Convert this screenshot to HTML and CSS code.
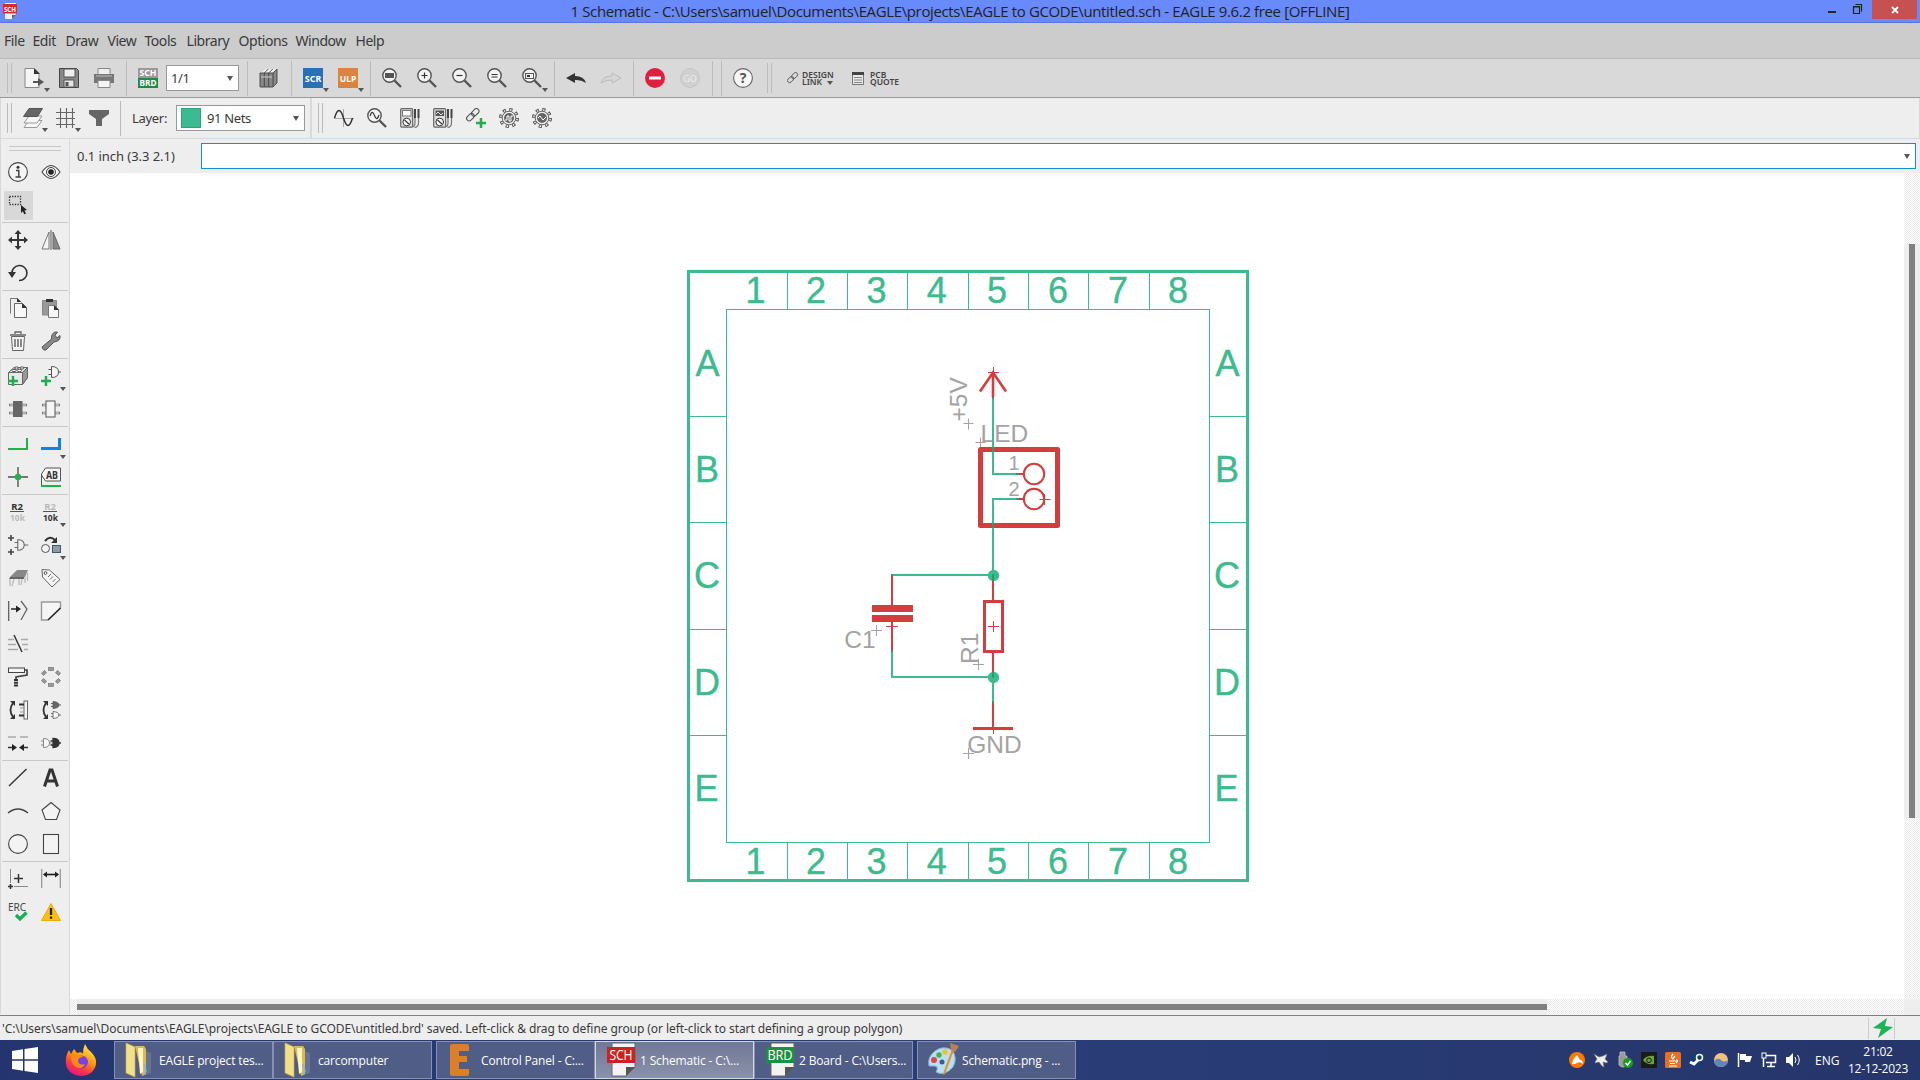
FILE: index.html
```html
<!DOCTYPE html>
<html lang="en">
<head>
<meta charset="utf-8">
<title>1 Schematic - EAGLE 9.6.2 free</title>
<link rel="stylesheet" href="styles.css">
</head>
<body>
<svg class="defs" width="0" height="0">
  <defs>
    <symbol id="lens" viewBox="0 0 20 20"><circle cx="7.5" cy="7.5" r="6.7" fill="#f4f4f4" stroke="#555" stroke-width="1.4"/><path d="M12.5 12.5L19 19" stroke="#555" stroke-width="2.4"/></symbol>
    <symbol id="chain" viewBox="0 0 20 20"><g fill="none" stroke="#555" stroke-width="1.3" transform="rotate(-45 8 8)"><rect x="-1" y="5" width="10" height="6" rx="3"/><rect x="7" y="5" width="10" height="6" rx="3"/></g></symbol>
    <symbol id="meter" viewBox="0 0 20 20"><rect x=".7" y=".7" width="12" height="18.4" rx="1" fill="#ddd" stroke="#666" stroke-width="1.2"/><circle cx="6.7" cy="14" r="3.8" fill="#fff" stroke="#333"/><path d="M4.5 12l4.4 4" stroke="#333" stroke-width="1.2"/><path d="M15 1v9M18.5 1v9" stroke="#444" stroke-width="2"/><path d="M15 10v5q0 3.5-3 4M18.5 10v5q0 4-4 4.5" fill="none" stroke="#777" stroke-width="1.2"/></symbol>
    <symbol id="gear" viewBox="0 0 20 20"><circle cx="10" cy="10" r="8.4" fill="none" stroke="#555" stroke-width="3.2" stroke-dasharray="3.2 3.4"/><circle cx="10" cy="10" r="8.2" fill="none" stroke="#eee" stroke-width="1.6" stroke-dasharray="1.4 5.04" stroke-dashoffset="-.9"/><circle cx="10" cy="10" r="6.8" fill="#eee" stroke="#666"/><circle cx="10" cy="10" r="5" fill="#666"/></symbol>
    <symbol id="gate" viewBox="0 0 20 20"><path d="M6 3.500h2q6 1 6 6.500t-6 6.500h-2zM2 7h4M2 13h4M14 10h5" fill="none" stroke="#666" stroke-width="1.3"/></symbol>
    <symbol id="folder" viewBox="0 0 32 36"><path d="M18 8l8 3v20l-8 3z" fill="#7f8a9c" opacity=".5"/><path d="M10 4h9l2 3v25l-4 2z" fill="#dcb951"/><path d="M13 6h5v24l-3 2z" fill="#fff6c4"/><path d="M1 1l9 4v30l-9-4z" fill="#f3e08b" stroke="#cfae4b" stroke-width=".7"/><path d="M19 22l2 7-2 3" fill="none" stroke="#7fb8e8" stroke-width="1.5"/></symbol>
  </defs>
</svg>

<header class="titlebar">
  <svg class="app-icon" width="14" height="17"><path d="M2 0h11v11l-4 5H2z" fill="#eee"/><path d="M9 16v-4h4z" fill="#666"/><rect width="14" height="9.500" y="1" fill="#d92a2a"/><text x="7" y="8.500" text-anchor="middle" class="t-badge" font-size="7" textLength="12" lengthAdjust="spacingAndGlyphs">SCH</text></svg>
  <div class="caption">1 Schematic - C:\Users\samuel\Documents\EAGLE\projects\EAGLE to GCODE\untitled.sch - EAGLE 9.6.2 free [OFFLINE]</div>
  <div class="win-buttons">
    <svg width="64" height="19"><path d="M20 12h8" stroke="#222" stroke-width="2"/><path d="M45.500 6.500h6v7h-6zM45 7h7M47.500 4.500h6v7" fill="none" stroke="#222" stroke-width="1.200"/></svg>
    <div class="close"><svg width="8" height="8"><path d="M1 1l6 6M7 1L1 7" stroke="#fff" stroke-width="1.800"/></svg></div>
  </div>
</header>

<nav class="menubar"><span class="m1">File</span><span class="m2">Edit</span><span class="m3">Draw</span><span class="m4">View</span><span class="m5">Tools</span><span class="m6">Library</span><span class="m7">Options</span><span class="m8">Window</span><span class="m9">Help</span></nav>

<div class="toolbar main-tools">
  <i class="handle"></i>
  <b class="btn drop"><svg width="20" height="20"><path d="M1 .5h9l5 5v14H1z" fill="#f5f5f5" stroke="#888"/><path d="M10 0l6 6h-6z" fill="#333"/><path d="M9 14h7" stroke="#555" stroke-width="2"/><path d="M14 10l6 4-6 4z" fill="#555"/></svg></b>
  <b class="btn"><svg width="20" height="20"><path d="M.5.5h17l2 2v17H.500z" fill="#888" stroke="#444"/><path d="M5 1h11v8H5z" fill="#eee" stroke="#555"/><path d="M5 12h10v7H5z" fill="#e5e5e5" stroke="#555"/><path d="M6.500 14h3v4h-3z" fill="#555"/></svg></b>
  <b class="btn"><svg width="20" height="20"><path d="M4 .5h12V7H4z" fill="#eee" stroke="#888"/><path d="M0 6h20v9H0z" fill="#777"/><path d="M2 8h16" stroke="#bbb"/><path d="M4 12.500h12v7H4z" fill="#f5f5f5" stroke="#888"/></svg></b>
  <i class="sep"></i>
  <b class="btn"><svg width="20" height="20"><rect width="20" height="10" fill="#999"/><rect y="10" width="20" height="10" fill="#1f8b43"/><text x="10" y="8.300" text-anchor="middle" class="t-badge" font-size="9" textLength="17" lengthAdjust="spacingAndGlyphs">SCH</text><text x="10" y="18.300" text-anchor="middle" class="t-badge" font-size="9" textLength="17" lengthAdjust="spacingAndGlyphs">BRD</text></svg></b>
  <div class="combo sheet"><span>1/1</span></div>
  <i class="sep after-combo"></i>
  <b class="btn"><svg width="20" height="20"><path d="M1 5l5-4h12v14l-5 4H1z" fill="#888"/><path d="M1 5l5-4h12l-4 4z" fill="#eee"/><path d="M1 5h13v14H1zM14 5l4-4v14l-4 4M5.300 5v14M9.700 5v14M5.300 5l4-4M9.700 5l4-4" fill="none" stroke="#444" stroke-width=".9"/><path d="M2 9h11" stroke="#ccc"/></svg></b>
  <i class="sep"></i>
  <b class="btn drop"><svg width="20" height="20"><rect width="20" height="20" fill="#2a70b8"/><text x="10" y="13.800" text-anchor="middle" class="t-badge" font-size="9.500" textLength="16.500" lengthAdjust="spacingAndGlyphs">SCR</text></svg></b>
  <b class="btn drop"><svg width="20" height="20"><rect width="20" height="20" fill="#dc843f"/><text x="10" y="13.800" text-anchor="middle" class="t-badge" font-size="9.500" textLength="16.500" lengthAdjust="spacingAndGlyphs">ULP</text></svg></b>
  <i class="sep"></i>
  <b class="btn"><svg width="20" height="20"><use href="#lens"/><rect x="3" y="5" width="9" height="5" fill="#555"/></svg></b>
  <b class="btn"><svg width="20" height="20"><use href="#lens"/><path d="M4.500 7.500h6M7.500 4.500v6" stroke="#333" stroke-width="1.200"/></svg></b>
  <b class="btn"><svg width="20" height="20"><use href="#lens"/><path d="M4.500 7.500h6" stroke="#333" stroke-width="1.200"/></svg></b>
  <b class="btn"><svg width="20" height="20"><use href="#lens"/><path d="M4.500 6.500h6M4.500 9h6" stroke="#333" stroke-width="1.200"/></svg></b>
  <b class="btn drop"><svg width="20" height="20"><use href="#lens"/><rect x="3.500" y="5.500" width="8" height="5" fill="none" stroke="#555"/><path d="M5 8h3" stroke="#333" stroke-width="2"/></svg></b>
  <i class="sep"></i>
  <b class="btn"><svg width="20" height="20"><path d="M0 10l9-5v3q9 0 11 7-5-3.500-11-3V15z" fill="#333"/></svg></b>
  <b class="btn"><svg width="20" height="20"><path d="M20 10l-9-5v3q-9 0-11 7 5-3.500 11-3V15z" fill="#d6d6d6" stroke="#bbb"/></svg></b>
  <i class="sep"></i>
  <b class="btn"><svg width="20" height="20"><circle cx="10" cy="10" r="10" fill="#df1f3d"/><path d="M4 10h12" stroke="#fff" stroke-width="3"/></svg></b>
  <b class="btn"><svg width="20" height="20"><circle cx="10" cy="10" r="9.500" fill="#d0d0d0" stroke="#c6c6c6"/><text x="10" y="14" text-anchor="middle" class="t-go">GO</text></svg></b>
  <i class="sep"></i><i class="sep"></i>
  <b class="btn"><svg width="20" height="20"><circle cx="10" cy="10" r="9.400" fill="#f7f7f7" stroke="#666" stroke-width="1.100"/><text x="10" y="15" text-anchor="middle" class="t-help">?</text></svg></b>
  <i class="handle link-handle"></i>
  <b class="wide design"><svg width="12" height="12"><use href="#chain" width="14" height="14"/></svg><span>DESIGN<br>LINK</span></b>
  <b class="wide quote"><svg width="12" height="13"><path d="M.5.5h11v12H.500z" fill="#e8e8e8" stroke="#777"/><path d="M0 1.500h12" stroke="#444" stroke-width="3"/><path d="M2 5.500h8M2 8h8M2 10.500h8" stroke="#888"/></svg><span>PCB<br>QUOTE</span></b>
</div>

<div class="toolbar param-tools">
  <i class="handle"></i>
  <b class="btn drop"><svg width="20" height="20"><g stroke="#999" fill="#f6f6f6"><path d="M6 12.500h13l-5 7H1z"/><path d="M6 8h13l-5 7H1z"/></g><path d="M6 .5h13.500l-5 8H.5z" fill="#666" stroke="#555"/></svg></b>
  <b class="btn drop"><svg width="20" height="20"><path d="M4.500 0v20M10.500 0v20M16.500 0v20M0 4.500h19M0 10.500h19M0 16.500h19" stroke="#666" stroke-width="1.100"/></svg></b>
  <b class="btn"><svg width="20" height="20"><path d="M0 2h20v4l-7 5v7H7v-7L0 6z" fill="#666"/></svg></b>
  <i class="sep"></i>
  <span class="layer-label">Layer:</span>
  <div class="combo layer"><em class="swatch"></em><span>91 Nets</span></div>
  <i class="split"></i>
  <i class="handle second"></i>
  <b class="btn"><svg width="20" height="20"><path d="M0 10.500h20M9.500 1v18" stroke="#aaa"/><path d="M.5 10q4.500-15 9 0t9 0" fill="none" stroke="#333" stroke-width="1.500"/></svg></b>
  <b class="btn"><svg width="20" height="20"><use href="#lens"/><path d="M3 8q2.300-7 4.500-.5T12 7" fill="none" stroke="#333" stroke-width="1.200"/></svg></b>
  <b class="btn"><svg width="20" height="20"><use href="#meter"/><rect x="2.500" y="2.500" width="8.500" height="5.500" fill="#fff" stroke="#777"/></svg></b>
  <b class="btn"><svg width="20" height="20"><use href="#meter"/><rect x="2.500" y="2.500" width="8.500" height="5.500" fill="#555"/><path d="M3 6l2-2 3 3 2-2" fill="none" stroke="#ddd"/></svg></b>
  <b class="btn"><svg width="20" height="20"><use href="#chain" width="17" height="17"/><path d="M10 15h10M15 10v10" stroke="#22ab50" stroke-width="2.500"/></svg></b>
  <b class="btn"><svg width="20" height="20"><use href="#gear"/><path d="M6 12h2V8h2v5h2V8h2" fill="none" stroke="#fff"/></svg></b>
  <b class="btn"><svg width="20" height="20"><use href="#gear"/><path d="M6 10l2-2 3 4 3-3" fill="none" stroke="#fff"/></svg></b>
</div>

<main class="workspace">
  <aside class="palette">
    <i class="grip"></i>
    <div class="tools">
      <b class="btn"><svg width="20" height="20"><circle cx="10" cy="10" r="9.400" fill="#f5f5f5" stroke="#444" stroke-width="1.100"/><circle cx="10" cy="5.300" r="1.500" fill="#333"/><path d="M8 8.500h2.800V15M7.500 15h5.500" fill="none" stroke="#444" stroke-width="1.500"/></svg></b>
      <b class="btn"><svg width="20" height="20"><path d="M1 10q9-13 18 0-9 13-18 0z" fill="#f5f5f5" stroke="#444" stroke-width="1.100"/><circle cx="10" cy="10" r="4.500" fill="none" stroke="#444"/><circle cx="10" cy="10" r="2.800" fill="#222"/></svg></b>
      <b class="btn on"><svg width="20" height="20"><path d="M1.500 1.500h11v8h-11z" fill="none" stroke="#333" stroke-width="1.300" stroke-dasharray="1.300 1.300"/><path d="M13 10l6 5-2.500.5 1.500 3-1.700.8-1.500-3L13 18z" fill="#222"/></svg></b>
    </div>
    <div class="tools">
      <b class="btn"><svg width="20" height="20"><path d="M2 10h16M10 2v16" stroke="#333" stroke-width="2"/><path d="M10 0l3.500 4h-7zM10 20l3.500-4h-7zM0 10l4-3.500v7zM20 10l-4-3.500v7z" fill="#333"/></svg></b>
      <b class="btn"><svg width="20" height="20"><path d="M8 2v17H1z" fill="#f5f5f5" stroke="#777"/><path d="M12 2v17h7z" fill="#888" stroke="#666"/><path d="M10 0v20" stroke="#555"/></svg></b>
      <b class="btn"><svg width="20" height="20"><path d="M4 11a7.500 7.500 0 1 1 7 6.500" fill="none" stroke="#333" stroke-width="1.600"/><path d="M0 9h8l-4 6z" fill="#333"/></svg></b>
    </div>
    <div class="tools">
      <b class="btn"><svg width="20" height="20"><path d="M2.500 15.500v-15h7l4 4" fill="none" stroke="#777"/><path d="M6.500 5.500h8l4 4v10h-12z" fill="#f7f7f7" stroke="#666"/><path d="M14 5l5 5h-5zM9 0l4 4H9z" fill="#333"/></svg></b>
      <b class="btn"><svg width="20" height="20"><path d="M1.500 2.500h14V17h-14z" fill="#999" stroke="#888"/><path d="M5 1h7v3H5z" fill="#333"/><path d="M7.500 7.500h6l4 4v8h-10z" fill="#f7f7f7" stroke="#777"/><path d="M13 7l5 5h-5z" fill="#333"/></svg></b>
      <b class="btn"><svg width="20" height="20"><path d="M3.500 5.500h13l-1 14h-11z" fill="#f2f2f2" stroke="#666"/><path d="M2 4h16M7 3V1h6v2" fill="none" stroke="#666" stroke-width="1.300"/><path d="M7 8v8M10 8v8M13 8v8" stroke="#555" stroke-width="1.300"/></svg></b>
      <b class="btn"><svg width="20" height="20"><path d="M1 16L10.500 8Q10 3 14 1l2.500.2-2.500 3L16 7l3-2.500Q20 10 13 11L5 19q-3 1-4-3z" fill="#888" stroke="#555"/></svg></b>
    </div>
    <div class="tools">
      <b class="btn"><svg width="20" height="20"><path d="M.5 6.500L6 1.500h13.500v10l-5 7H.500z" fill="#e8e8e8" stroke="#666"/><path d="M14.500 6.500l5-5v10l-5 7z" fill="#999" stroke="#666"/><path d="M.5 6.500h14" stroke="#666"/><g fill="#fff" stroke="#555"><ellipse cx="6" cy="4.500" rx="2.200" ry="1.200"/><ellipse cx="11.500" cy="4.500" rx="2.200" ry="1.200"/><ellipse cx="8.500" cy="2" rx="2" ry="1.100"/><ellipse cx="14" cy="2" rx="2" ry="1.100"/></g><path d="M0 15h10M5 10v10" stroke="#22ab50" stroke-width="2.500"/></svg></b>
      <b class="btn drop"><svg width="20" height="20"><path d="M10.500.5q7 0 7 5.500t-7 5.500zM7.500 3.500h3M7.500 8.500h3M17.500 6H20" fill="#f5f5f5" stroke="#555"/><path d="M0 15h10M5 10v10" stroke="#22ab50" stroke-width="2.500"/></svg></b>
      <b class="btn"><svg width="20" height="20"><path d="M1 6h18M1 14h18" stroke="#777" stroke-width="2.600"/><path d="M2 6h16M2 14h16" stroke="#eee"/><rect x="5" y="2" width="9.500" height="16" fill="#666"/></svg></b>
      <b class="btn"><svg width="20" height="20"><path d="M1 6h18M1 14h18" stroke="#777" stroke-width="2.600"/><path d="M2 6h16M2 14h16" stroke="#eee"/><rect x="5" y="2" width="9" height="16" fill="#f5f5f5" stroke="#555"/></svg></b>
    </div>
    <div class="tools">
      <b class="btn"><svg width="20" height="20"><path d="M0 15h19V4" fill="none" stroke="#22b14c" stroke-width="2"/></svg></b>
      <b class="btn drop"><svg width="20" height="20"><path d="M0 14.500h18.500V4" fill="none" stroke="#0a84e8" stroke-width="3"/></svg></b>
      <b class="btn"><svg width="20" height="20"><path d="M0 10h20M10 0v20" stroke="#777" stroke-width="1.800"/><circle cx="10" cy="10" r="3.200" fill="#22b14c"/></svg></b>
      <b class="btn"><svg width="20" height="20"><path d="M.5 18V7l4-6h15v13h-15l-4-6" fill="#f5f5f5" stroke="#555"/><path d="M0 19h20" stroke="#22b14c" stroke-width="2"/><text x="11" y="11.500" text-anchor="middle" class="t-icon" font-size="10" textLength="12" lengthAdjust="spacingAndGlyphs">AB</text></svg></b>
    </div>
    <div class="tools">
      <b class="btn"><svg width="20" height="20"><text x="9" y="7.500" text-anchor="middle" class="t-icon" font-size="9.500">R2</text><path d="M2 9.500h14" stroke="#555"/><text x="9.500" y="18.500" text-anchor="middle" class="t-icon dim" font-size="9.500" textLength="15" lengthAdjust="spacingAndGlyphs">10k</text></svg></b>
      <b class="btn drop"><svg width="20" height="20"><text x="9" y="7.500" text-anchor="middle" class="t-icon dim" font-size="9.500">R2</text><path d="M2 9.500h14" stroke="#555"/><text x="9.500" y="18.500" text-anchor="middle" class="t-icon" font-size="9.500" textLength="15" lengthAdjust="spacingAndGlyphs">10k</text></svg></b>
      <b class="btn"><svg width="20" height="20"><use href="#gate" x="5" y="2" width="16" height="16"/><path d="M0 3h6M3 0v6M0 17h6M3 14v6" stroke="#444" stroke-width="1.600"/></svg></b>
      <b class="btn drop"><svg width="20" height="20"><circle cx="4.500" cy="13.500" r="4" fill="#f5f5f5" stroke="#555"/><rect x="11.500" y="10.500" width="8" height="7" fill="#999" stroke="#335e82"/><path d="M4 6q5-6 10-1" fill="none" stroke="#333" stroke-width="2"/><path d="M16 2v6h-6z" fill="#333"/></svg></b>
      <b class="btn"><svg width="20" height="20"><path d="M9 2h11l-3 7H2z" fill="#888"/><path d="M2 9h14v2H1z" fill="#666"/><path d="M2 11v7M6 11l-2 7M11 11v6M14 11l-1 6M17 9v6M19.500 5v8" stroke="#bbb" stroke-width="1.300"/></svg></b>
      <b class="btn"><svg width="20" height="20"><path d="M1 1.500l7.500.5L19 11.500 11 19 1.500 9z" fill="#f5f5f5" stroke="#666"/><circle cx="4.500" cy="5" r="1.400" fill="none" stroke="#555"/><path d="M7 9l3-3M9 11.500l3-3M11.500 14l3-3" stroke="#666"/></svg></b>
      <b class="btn"><svg width="20" height="20"><path d="M.7 0v20" stroke="#555" stroke-width="1.200"/><path d="M3 8h7" stroke="#333" stroke-width="1.600"/><path d="M8 4.500l5 3.500-5 3.500z" fill="#222"/><path d="M13 0l6 8-6 11" fill="none" stroke="#666" stroke-width="1.300"/></svg></b>
      <b class="btn"><svg width="20" height="20"><path d="M7 19H.500V1h19v6" fill="#f5f5f5" stroke="#999" stroke-width="1.400"/><path d="M7 19L19.500 7" stroke="#222" stroke-width="1.700"/></svg></b>
      <b class="btn"><svg width="20" height="20"><path d="M0 5.500h6M13 5.500h7M0 10.500h8M14 10.500h6M0 15.500h10M16 15.500h4" stroke="#aaa" stroke-width="1.300"/><path d="M6 1l8 17" stroke="#333" stroke-width="1.500"/></svg></b>
      <i class="blank"></i>
      <b class="btn"><svg width="20" height="20"><rect x=".5" y="1" width="16" height="4.500" fill="#f5f5f5" stroke="#444"/><path d="M17 3h2v5L8 10v3" fill="none" stroke="#444" stroke-width="1.700"/><path d="M8 12v8" stroke="#333" stroke-width="4" stroke-dasharray="2 .7"/></svg></b>
      <b class="btn"><svg width="20" height="20"><g fill="#999" stroke="#777" stroke-width=".7"><rect x="7.500" y=".5" width="5" height="3"/><rect x="7.500" y="16.500" width="5" height="3"/><rect x="1" y="4.500" width="4" height="3" transform="rotate(-40 3 6)"/><rect x="15" y="4.500" width="4" height="3" transform="rotate(40 17 6)"/><rect x="1" y="12.500" width="4" height="3" transform="rotate(40 3 14)"/><rect x="15" y="12.500" width="4" height="3" transform="rotate(-40 17 14)"/></g></svg></b>
      <b class="btn"><svg width="20" height="20"><path d="M5 3q-5 7 0 14" fill="none" stroke="#333" stroke-width="1.800"/><path d="M2 1h5v5zM2 19h5v-5z" fill="#333"/><rect x="16" y="1" width="3.500" height="18" fill="#f5f5f5" stroke="#666"/><path d="M11 4.500h5M11 15.500h5" stroke="#333" stroke-width="2"/><path d="M12 8h4M12 12h4" stroke="#999"/></svg></b>
      <b class="btn"><svg width="20" height="20"><path d="M5 3q-5 7 0 14" fill="none" stroke="#333" stroke-width="1.800"/><path d="M2 1h5v5zM2 19h5v-5z" fill="#333"/><path d="M12 1.500q6 .5 6 3.500t-6 3.500zM10 3.500h2M10 6.500h2M17 5h3" fill="#666" stroke="#666"/><path d="M12 11.500q6 .5 6 3.500t-6 3.500zM10 13.500h2M10 16.500h2M17 15h3" fill="#f5f5f5" stroke="#777"/></svg></b>
      <b class="btn"><svg width="20" height="20"><path d="M0 4h8M12 4h8" stroke="#aaa" stroke-width="1.600"/><path d="M0 14.500h6M14 14.500h6" stroke="#333" stroke-width="1.500"/><path d="M4 11l5 3.500L4 18zM16 11l-5 3.500 5 3.500z" fill="#222"/></svg></b>
      <b class="btn"><svg width="20" height="20"><path d="M2.500 5.500q6 0 6 4.500t-6 4.500zM0 8h2M0 12h2M8.500 10h2" fill="#f5f5f5" stroke="#888"/><path d="M12 5.500q6 0 6 4.500t-6 4.500zM9.500 8h3M9.500 12h3M17 10h3" fill="#333" stroke="#333" stroke-width="1.300"/></svg></b>
    </div>
    <div class="tools">
      <b class="btn"><svg width="20" height="20"><path d="M1 18L18.500 1" stroke="#333" stroke-width="1.400"/></svg></b>
      <b class="btn"><svg width="20" height="20"><path d="M3.500 18.500L9 2h2l5.500 16.500M5.500 13h9" fill="none" stroke="#333" stroke-width="3"/></svg></b>
      <b class="btn"><svg width="20" height="20"><path d="M0 12q10-8 20 0" fill="none" stroke="#444" stroke-width="1.400"/></svg></b>
      <b class="btn"><svg width="20" height="20"><path d="M10 1.500l9 7.500-3.500 9.500h-11L1 9z" fill="#f3f3f3" stroke="#444" stroke-width="1.100"/></svg></b>
      <b class="btn"><svg width="20" height="20"><circle cx="10" cy="10" r="9.400" fill="#f3f3f3" stroke="#444" stroke-width="1.100"/></svg></b>
      <b class="btn"><svg width="20" height="20"><rect x="2.500" y=".5" width="15" height="19" fill="#f3f3f3" stroke="#444" stroke-width="1.100"/></svg></b>
    </div>
    <div class="tools">
      <b class="btn"><svg width="20" height="20"><path d="M2.500 0v14M6 17.500h14" stroke="#888"/><path d="M6 9.500h9M10.500 5v9M0 17.500h5M2.500 15v5" stroke="#333" stroke-width="1.500"/></svg></b>
      <b class="btn"><svg width="20" height="20"><path d="M.7 0v19M19.300 0v19" stroke="#999" stroke-width="1.300"/><path d="M3 5.500h14" stroke="#222" stroke-width="1.700"/><path d="M2 5.500l4-3v6zM18 5.500l-4-3v6z" fill="#222"/></svg></b>
      <b class="btn"><svg width="20" height="20"><text x="9" y="9" text-anchor="middle" class="t-erc">ERC</text><path d="M8 13l4 4 6.500-6.500" fill="none" stroke="#16b04f" stroke-width="3.200"/></svg></b>
      <b class="btn"><svg width="20" height="20"><path d="M10 1.500l9.500 17H.500z" fill="#fdc010" stroke="#f0ab00"/><path d="M10 6v7M10 14.500v2.300" stroke="#222" stroke-width="2.300"/></svg></b>
    </div>
  </aside>

  <section class="editor">
    <div class="command-row"><span class="coords">0.1 inch (3.3 2.1)</span><div class="command"></div></div>
    <div class="view">
      <svg class="sheet-view" viewBox="70 173 1834 826" width="1834" height="826">
        <g fill="none" stroke="#3dbb90">
          <rect x="688.500" y="271.500" width="559" height="609" stroke-width="3"/>
          <rect x="726.500" y="309.500" width="483" height="533"/>
          <path d="M787.500 273v36M847.500 273v36M907.500 273v36M968.500 273v36M1028.500 273v36M1088.500 273v36M1149.500 273v36M787.500 843v36M847.500 843v36M907.500 843v36M968.500 843v36M1028.500 843v36M1088.500 843v36M1149.500 843v36"/>
          <path d="M690 416.500h36M690 522.500h36M690 629.500h36M690 735.500h36M1210 416.500h36M1210 522.500h36M1210 629.500h36M1210 735.500h36"/>
        </g>
        <g class="frame-text">
          <text x="755.500" y="303">1</text><text x="816" y="303">2</text><text x="876.500" y="303">3</text><text x="936.800" y="303">4</text><text x="997" y="303">5</text><text x="1058" y="303">6</text><text x="1118" y="303">7</text><text x="1178" y="303">8</text>
          <text x="755.500" y="874">1</text><text x="816" y="874">2</text><text x="876.500" y="874">3</text><text x="936.800" y="874">4</text><text x="997" y="874">5</text><text x="1058" y="874">6</text><text x="1118" y="874">7</text><text x="1178" y="874">8</text>
          <text x="707.500" y="375.500">A</text><text x="707" y="482">B</text><text x="707" y="588">C</text><text x="707" y="695">D</text><text x="706.500" y="801">E</text>
          <text x="1227.500" y="375.500">A</text><text x="1227" y="482">B</text><text x="1227" y="588">C</text><text x="1227" y="695">D</text><text x="1226.500" y="801">E</text>
        </g>
        <g class="part-text">
          <text transform="translate(967.400 421.500) rotate(-90)">+5V</text>
          <text x="980.500" y="442">LED</text>
          <text x="1008.500" y="470" class="pin">1</text><text x="1008.500" y="496" class="pin">2</text>
          <text x="844.300" y="648">C1</text>
          <text transform="translate(978 664) rotate(-90)">R1</text>
          <text x="967.300" y="753">GND</text>
        </g>
        <path d="M963.500 423.500h10M968.500 418.500v11M975.500 442.500h10M980.500 437.500v11M871 630.500h11M876.500 625v11M973 664.500h11M978.500 659v11M963 753.500h11M968.500 748v11" stroke="#a3a3a3"/>
        <g fill="none" stroke="#d43c3d" stroke-width="2">
          <path d="M993 372v25M980 391.500l13-19 13 19" stroke-width="2.600"/>
          <rect x="980.500" y="449.500" width="77" height="76" stroke-width="5" stroke-linejoin="round"/>
          <circle cx="1034" cy="474" r="10.200"/><circle cx="1034" cy="499" r="10.200"/>
          <path d="M1018 474h6M1018 499h6M892 574v31M892 622v29M993 581v20M993 653v25M993 702v26"/>
          <rect x="984.500" y="601.500" width="18" height="50" stroke-width="3"/>
          <path d="M872 608.500h41M872 618.500h41" stroke-width="7"/>
          <path d="M973 728.500h40" stroke-width="3"/>
          <path d="M988 372.500h11M993.500 367v11M1039.500 499.500h11M1044.500 494v11M886 626.500h12M988 626.500h11M993.500 621v11M993.500 730v4" stroke-width="1"/>
        </g>
        <g fill="none" stroke="#3dbb90" stroke-width="2">
          <path d="M993 397v77h25M1018 499h-25v82M993 575H892M892 651v26h101M993 677v26"/>
        </g>
        <circle cx="993.500" cy="575.500" r="5.700" fill="#3dbb90"/><circle cx="993.500" cy="677.500" r="5.700" fill="#3dbb90"/>
        <path d="M993 397v2M1016 474h3M1016 499h3M993 574v7M892 574v2M892 650v2M993 672v6M993 701v2M993 447v5M993 523v5" stroke="#31986a" stroke-width="2"/>
      </svg>
      <div class="vscroll"><i></i></div>
      <div class="hscroll"><i></i></div>
      <div class="corner"></div>
    </div>
  </section>
</main>

<footer class="statusbar"><span>'C:\Users\samuel\Documents\EAGLE\projects\EAGLE to GCODE\untitled.brd' saved. Left-click &amp; drag to define group (or left-click to start defining a group polygon)</span>
  <div class="bolt"><svg width="20" height="20"><path d="M14 0L0 10l8 1-3 9 15-11-8-1z" fill="#1cb454"/></svg></div>
</footer>

<div class="taskbar">
  <div class="start"><svg width="26" height="26"><path d="M0 4l11-1.700V12.200H0zM12.500 2L26 0v12.200H12.500zM0 13.700h11v10L0 22zM12.500 13.700H26V26l-13.500-2z" fill="#fff"/></svg></div>
  <div class="firefox"><svg width="32" height="32"><defs><linearGradient id="fx" x1=".8" y1="0" x2=".3" y2="1"><stop offset="0" stop-color="#fff44f"/><stop offset=".45" stop-color="#ff980e"/><stop offset=".75" stop-color="#ff3647"/><stop offset="1" stop-color="#e31587"/></linearGradient></defs><path d="M20 0q2 5 6 8 6 6 5 12-2 11-15 12Q3 31 1 20 0 12 4 6l2 4 3-5 3 4q5-2 6 1 0-6 2-10z" fill="url(#fx)"/><circle cx="16.500" cy="18" r="6.500" fill="#7542e5"/><path d="M6 13q6-4 13 0-6 0-6 4 1 5 7 3-3 6-9 3-5-3-5-10z" fill="#ff8a16"/></svg></div>
  <div class="task t1"><svg width="32" height="36"><use href="#folder"/></svg><span>EAGLE project tes...</span></div>
  <div class="task t2"><svg width="32" height="36"><use href="#folder"/></svg><span>carcomputer</span></div>
  <div class="task t3"><svg width="32" height="36"><path d="M3 4q0-2 3-2h14q2 0 2 2v5H12v5h8v6h-8v7h10v5q0 2-2 2H6q-3 0-3-2z" fill="#dc7f27"/></svg><span>Control Panel - C:...</span></div>
  <div class="task t4 active"><svg width="32" height="36"><path d="M5 1h23v24l-9 9H5z" fill="#f3f3f3" stroke="#666"/><path d="M19 34v-9h9z" fill="#555"/><rect y="5" width="28" height="16" fill="#d0201f"/><text x="14" y="18" text-anchor="middle" class="t-doc" textLength="23" lengthAdjust="spacingAndGlyphs">SCH</text></svg><span>1 Schematic - C:\...</span></div>
  <div class="task t5"><svg width="32" height="36"><path d="M5 1h23v24l-9 9H5z" fill="#f3f3f3" stroke="#666"/><path d="M19 34v-9h9z" fill="#555"/><rect y="5" width="28" height="16" fill="#1a9040"/><text x="14" y="18" text-anchor="middle" class="t-doc" textLength="25" lengthAdjust="spacingAndGlyphs">BRD</text></svg><span>2 Board - C:\Users...</span></div>
  <div class="task t6"><svg width="32" height="36"><path d="M1 24q-2-9 6-15t17-1q6 8 1 17-9 10-17 5 3-5-1-6z" fill="#b9dff2" stroke="#79b4d8"/><circle cx="6" cy="18" r="3" fill="#e04343"/><circle cx="11" cy="13" r="2.700" fill="#46b04a"/><circle cx="17" cy="10" r="2.700" fill="#f0c030"/><circle cx="14" cy="20" r="2.500" fill="#33618d"/><path d="M26 8l-9 24-2 1 1-4 8-22z" fill="#ef8e25"/><path d="M22 1l9 3-4 6-4-2z" fill="#b98255"/></svg><span>Schematic.png - ...</span></div>
  <div class="tray">
    <svg width="16" height="16"><circle cx="8" cy="8" r="8" fill="#ff7800"/><path d="M3 12q1-6 5-9l3 5q3 0 3 4-3-3-6-1-3 2-5 1z" fill="#fff"/></svg>
    <svg width="16" height="16"><path d="M1 2l5 3 4-1 4-2-1 3-1 2 3 3-2 1-3-1 1 5-2-1-3-4-4 1v-1l2-3z" fill="#eee" stroke="#777" stroke-width=".6"/></svg>
    <svg width="16" height="16"><path d="M3 0h5v4h2v9q-4 4-8 0V4h1z" fill="#999" stroke="#ccc" stroke-width=".7"/><circle cx="11" cy="11" r="5" fill="#15a01b"/><path d="M8.500 11l2 2 3-4" stroke="#fff" stroke-width="1.500" fill="none"/></svg>
    <svg width="16" height="16"><rect width="16" height="16" fill="#191c19"/><path d="M2 8q4-5 11-4v8Q5 13 2 8z" fill="#6da43a"/><circle cx="8" cy="8.300" r="2.300" fill="none" stroke="#191c19"/></svg>
    <svg width="16" height="16"><rect width="16" height="16" rx="1.500" fill="#e0702a"/><path d="M8 2q-3 3 0 5 1-2 2-3M4 9h7M5 11.500h5M4 14h8M11 8q3 0 0 3" fill="none" stroke="#fff" stroke-width="1.200"/></svg>
    <svg width="16" height="16"><circle cx="8" cy="8" r="7.500" fill="#143e72"/><circle cx="10.500" cy="5.500" r="3" fill="none" stroke="#fff" stroke-width="1.500"/><path d="M1 10l4 2 4-4" fill="none" stroke="#fff" stroke-width="3"/></svg>
    <svg width="16" height="16"><circle cx="8" cy="8" r="7" fill="#f3c07d"/><path d="M1 9q4-4 7-1t7 0q-1 7-7 7T1 9z" fill="#5f86b8"/></svg>
    <svg width="16" height="16"><path d="M1.500 1v14" stroke="#fff" stroke-width="1.500"/><path d="M3 2h6v2h6l-2 6H8V8H3z" fill="#fff"/></svg>
    <svg width="16" height="16"><path d="M5 3.500h9.500v7H5M10 10v4M6 14.500h8M2.500 6v9" fill="none" stroke="#fff" stroke-width="1.500"/><rect x="1" y="1" width="4" height="5" fill="#26366b" stroke="#fff"/></svg>
    <svg width="16" height="16"><path d="M1 5h3l4-4v14l-4-4H1z" fill="#fff"/><path d="M10 5q2 3 0 6M12.500 3q3.500 5 0 10" fill="none" stroke="#fff"/></svg>
  </div>
  <span class="lang">ENG</span>
  <div class="clock"><span>21:02</span><span>12-12-2023</span></div>
</div>
</body>
</html>
```
FILE: styles.css
```css
* { box-sizing: border-box; }
body { margin: 0; width: 1920px; height: 1080px; overflow: hidden; display: flex; flex-direction: column; font-family: "Noto Sans", sans-serif; font-size: 13px; color: #3a3a3a; background: #eee; }
svg { display: block; flex: none; overflow: visible; }
.defs { position: absolute; }
i, em, b { font-style: normal; font-weight: normal; display: block; flex: none; }
span { white-space: nowrap; }

.titlebar { flex: none; height: 23px; background: #688afb; border-bottom: 1px solid #5876d6; display: flex; align-items: flex-start; }
.app-icon { margin: 3px 0 0 3px; }
.caption { flex: 1; text-align: center; font: 15px/23px "Open Sans", sans-serif; color: #222; padding-left: 95px; white-space: nowrap; letter-spacing: -.37px; }
.win-buttons { display: flex; width: 112px; }
.close { width: 45px; height: 19px; background: #c75050; display: flex; align-items: center; justify-content: center; }

.menubar { flex: none; height: 36px; background: #ccc; border-bottom: 1px solid #b9b9b9; display: flex; align-items: center; padding-left: 4px; font-size: 14px; letter-spacing: -.45px; }
.menubar span { flex: none; }
.m1 { width: 28.500px; }
.m2 { width: 33px; }
.m3 { width: 42px; }
.m4 { width: 37px; }
.m5 { width: 42px; }
.m6 { width: 52px; }
.m7 { width: 57px; }
.m8 { width: 60px; }

.toolbar { flex: none; display: flex; align-items: center; }
.main-tools { height: 39px; background: #d9d9d9; border-bottom: 1px solid #999; }
.param-tools { height: 41px; border-bottom: 1px solid #d9d9d9; border-left: 1px solid #d9d9d9; border-right: 1px solid #d9d9d9; }
.handle { width: 5px; height: 30px; margin: 0 4px 0 7px; border: solid #bbb; border-width: 0 1px; }
.param-tools .handle { margin: 0 4px 0 6px; }
.btn { width: 35px; height: 33px; display: flex; align-items: center; justify-content: center; position: relative; }
.param-tools .btn { width: 33px; }
.drop::after { content: ""; position: absolute; right: 1px; bottom: 3px; border: 3px solid transparent; border-top: 4px solid #555; border-bottom: 0; }
.sep { width: 9px; height: 35px; background: linear-gradient(#bbb, #bbb) 5px 0 / 1px 100% no-repeat; }
.after-combo { margin-left: 3px; }
.combo { background: #fff; border: 1px solid #999; height: 26px; display: flex; align-items: center; position: relative; letter-spacing: -.35px; }
.combo::after, .command::after { content: ""; position: absolute; right: 5px; top: 10px; border: 3px solid transparent; border-top: 5px solid #555; border-bottom: 0; }
.sheet { width: 73px; margin-left: 1px; padding-left: 4px; }
.link-handle { margin: 0 15px 0 7px; }
.wide { display: flex; align-items: center; gap: 3px; font: 600 8.500px/7px "Noto Sans", sans-serif; color: #444; position: relative; }
.design { width: 65px; }
.design::after { content: ""; position: absolute; right: 19px; bottom: 0; border: 3px solid transparent; border-top: 4px solid #555; border-bottom: 0; }
.quote { gap: 6px; }

.layer-label { margin-left: 8px; width: 44px; letter-spacing: -.3px; }
.layer { width: 129px; padding-left: 4px; }
.swatch { width: 20px; height: 20px; background: #3dbb90; border: 1px solid #2fa37b; margin-right: 6px; }
.split { width: 2px; height: 40px; background: #d9d9d9; margin-left: 5px; }

.workspace { flex: 1; min-height: 0; display: flex; }
.palette { width: 70px; border: solid #d9d9d9; border-width: 0 1px; margin-bottom: 1px; }
.palette .btn { width: 33px; align-items: flex-start; justify-content: flex-start; padding: 6px 0 0 7px; }
.grip { height: 17px; margin: 0 8px; background: linear-gradient(#c8c8c8, #c8c8c8) 0 7px / 100% 1px no-repeat, linear-gradient(#c8c8c8, #c8c8c8) 0 11px / 100% 1px no-repeat; }
.tools { display: grid; grid-template-columns: 33px 33px; grid-auto-rows: 33px; padding-bottom: 2px; background: linear-gradient(#c9c9c9, #c9c9c9) 1px calc(100% - 1px) / 66px 1px no-repeat; }
.tools:last-child { background: none; }
.on { background: linear-gradient(#d8d8d8, #d8d8d8) 3px 2px / 29px 29px no-repeat; }
.palette .drop::after { right: 1px; bottom: 2px; }
.editor { flex: 1; display: flex; flex-direction: column; }
.command-row { height: 34px; flex: none; display: flex; align-items: center; }
.coords { width: 131px; padding-left: 7px; letter-spacing: -.05px; }
.command { width: 1715px; height: 26px; margin-top: -1px; border: 1px solid #1191cf; background: #fff; position: relative; }
.view { flex: 1; display: grid; grid-template-columns: 1834px 16px; grid-template-rows: 826px 16px; }
.sheet-view { background: #fff; }
.vscroll, .hscroll { background: repeating-conic-gradient(#e9e9e9 0 25%, #fff 0 50%) 0 0 / 2px 2px; }
.vscroll { padding-top: 71px; }
.vscroll i { width: 16px; height: 574px; background: linear-gradient(90deg, #eee 5px, #808080 5px 11px, #eee 11px); }
.hscroll { padding-left: 7px; }
.hscroll i { width: 1470px; height: 16px; background: linear-gradient(#eee 5px, #808080 5px 11px, #eee 11px); }
.frame-text { font: 36px "Liberation Sans", sans-serif; fill: #3dbb90; stroke: #3dbb90; stroke-width: .4px; text-anchor: middle; }
.part-text { font: 24.500px "Liberation Sans", sans-serif; fill: #a3a3a3; }
.pin { font-size: 20px; }

.statusbar { flex: none; height: 25px; border-top: 1px solid #808080; display: flex; justify-content: space-between; align-items: center; padding: 0 25px 0 2px; font-size: 12px; letter-spacing: -.075px; }
.bolt { width: 27px; height: 21px; border: solid #ccc; border-width: 0 1px; padding-left: 4px; }

.taskbar { flex: none; height: 40px; background: linear-gradient(90deg, #24346e, #2a3d78 50%, #26366b); display: flex; align-items: center; color: #fff; font: 12px "Open Sans", sans-serif; }
.start { width: 65px; padding-left: 12px; }
.firefox { width: 49px; }
.task { flex: none; width: 159px; height: 38px; display: flex; align-items: center; background: #505d86; border: 1px solid #8790ae; letter-spacing: -.15px; }
.task svg { margin: 0 2px 0 10px; }
.t4 svg, .t5 svg { margin: 0 1px 0 11px; }
.t2, .t5 { margin-right: 4px; }
.active { background: linear-gradient(#6f7896, #8a91aa); border-color: #d5d8e3; }
.tray { margin-left: auto; display: flex; gap: 8px; }
.lang { margin-left: 14px; width: 28px; }
.clock { width: 70px; display: flex; flex-direction: column; align-items: center; line-height: 17px; margin-right: 7px; letter-spacing: -.25px; }

.t-badge { font-family: "Noto Sans", sans-serif; font-weight: bold; fill: #fff; }
.t-go { font: 9px "Noto Sans", sans-serif; fill: #eee; }
.t-help { font: bold 14px "Noto Sans", sans-serif; fill: #555; }
.t-icon { font-family: "Noto Sans", sans-serif; font-weight: bold; fill: #333; }
.t-icon.dim { fill: #bbb; }
.t-erc { font: 10px "Noto Sans", sans-serif; fill: #444; }
.t-doc { font: 14px "Open Sans", sans-serif; fill: #fff; }
```
